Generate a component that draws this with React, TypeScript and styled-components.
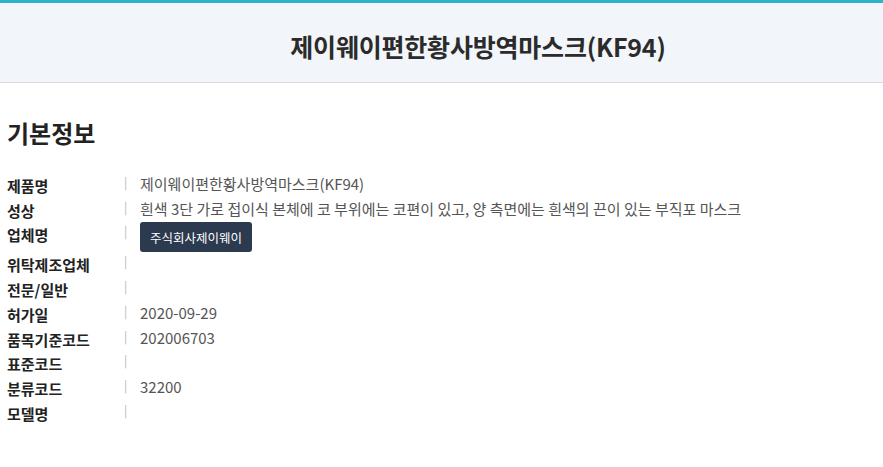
import React from "react";
import styled, { createGlobalStyle } from "styled-components";

const GlobalStyle = createGlobalStyle`
  html, body {
    margin: 0;
    padding: 0;
    background: #ffffff;
    font-family: "Noto Sans CJK KR", "Noto Sans", sans-serif;
  }
`;

const Header = styled.header`
  border-top: 3px solid #2db2c9;
  background: #f2f5f9;
  border-bottom: 1px solid #d8dadd;
  box-sizing: border-box;
  height: 83px;
  display: flex;
  align-items: center;
  justify-content: center;
  padding: 7px 0 0 73px;
`;

const Title = styled.h1`
  margin: 0;
  font-size: 25px;
  font-weight: 700;
  color: #2b2b2b;
  letter-spacing: -0.2px;
`;

const Section = styled.section`
  padding: 33px 7px 0;
`;

const SectionTitle = styled.h2`
  margin: 0 0 24px;
  font-size: 24px;
  font-weight: 700;
  color: #222;
  line-height: 34px;
`;

const InfoList = styled.dl`
  margin: 0;
  display: grid;
  grid-template-columns: 117px 16px 1fr;
`;

const Label = styled.dt`
  font-size: 15px;
  font-weight: 700;
  color: #222;
  line-height: 24.7px;
`;

const Divider = styled.span`
  font-size: 12px;
  color: #b5b5b5;
  line-height: 16px;
`;

const Value = styled.dd`
  margin: 0;
  font-size: 15px;
  color: #555;
  line-height: 20px;
  min-height: 24.7px;
`;

const CompanyButton = styled.button`
  display: block;
  background: #2b3a4e;
  color: #fff;
  border: none;
  border-radius: 3px;
  height: 30px;
  width: 112px;
  padding: 0;
  font-family: inherit;
  font-size: 12.5px;
  margin: -1px 0 1px;
  cursor: pointer;
`;

const rows: { label: string; value?: string; button?: boolean }[] = [
  { label: "제품명", value: "제이웨이편한황사방역마스크(KF94)" },
  { label: "성상", value: "흰색 3단 가로 접이식 본체에 코 부위에는 코편이 있고, 양 측면에는 흰색의 끈이 있는 부직포 마스크" },
  { label: "업체명", value: "주식회사제이웨이", button: true },
  { label: "위탁제조업체" },
  { label: "전문/일반" },
  { label: "허가일", value: "2020-09-29" },
  { label: "품목기준코드", value: "202006703" },
  { label: "표준코드" },
  { label: "분류코드", value: "32200" },
  { label: "모델명" },
];

export default function App() {
  return (
    <>
      <GlobalStyle />
      <Header>
        <Title>제이웨이편한황사방역마스크(KF94)</Title>
      </Header>
      <Section>
        <SectionTitle>기본정보</SectionTitle>
        <InfoList>
          {rows.map((r) => (
            <React.Fragment key={r.label}>
              <Label>{r.label}</Label>
              <Divider>|</Divider>
              <Value>
                {r.button ? <CompanyButton>{r.value}</CompanyButton> : r.value}
              </Value>
            </React.Fragment>
          ))}
        </InfoList>
      </Section>
    </>
  );
}
